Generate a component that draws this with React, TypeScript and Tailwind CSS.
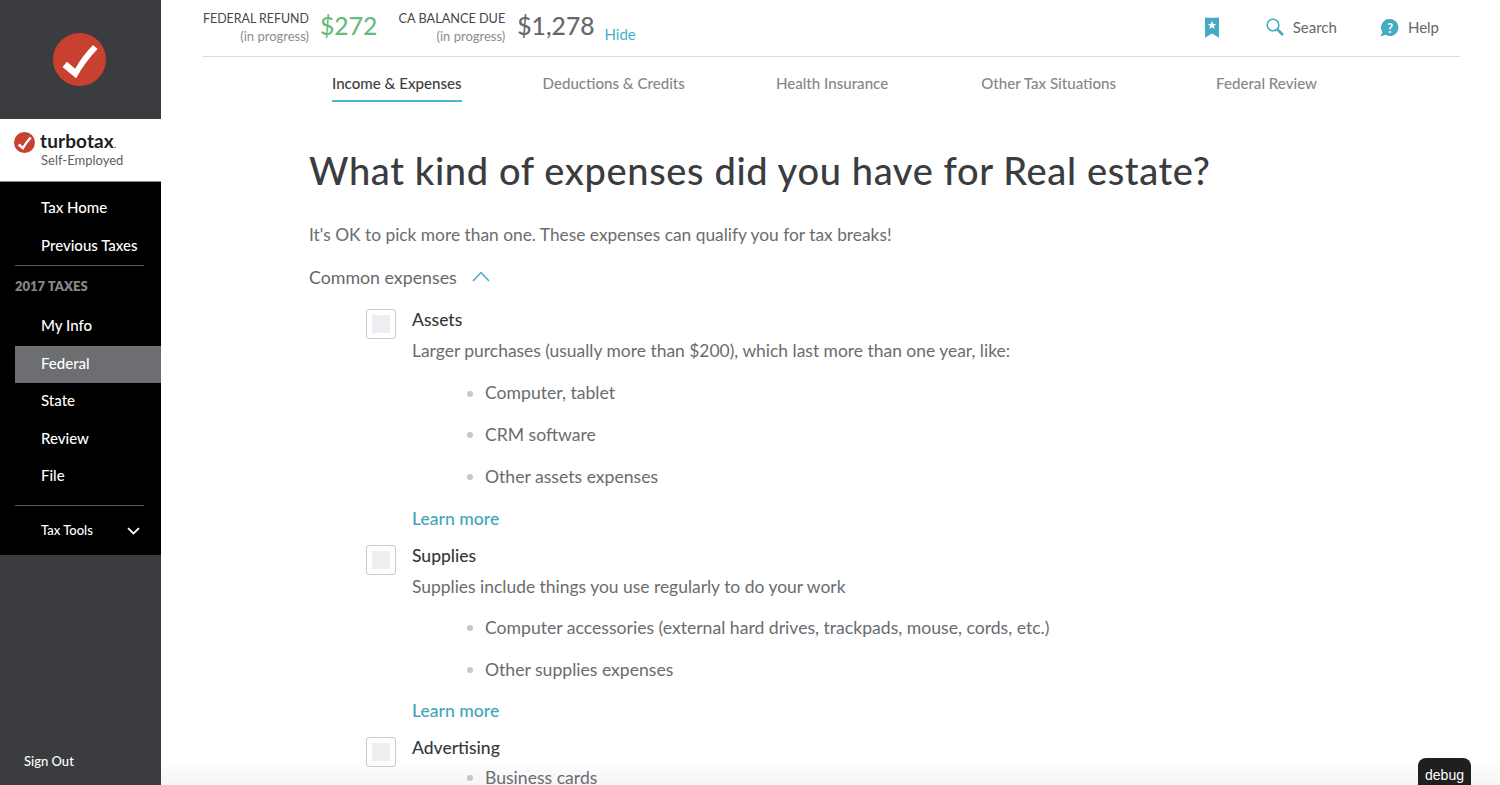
import React from "react";

const font = { fontFamily: "Lato, 'Open Sans', sans-serif" };

function Check({ size }: { size: number }) {
  return (
    <svg width={size} height={size} viewBox="0 0 52 52" className="shrink-0">
      <circle cx="26" cy="26" r="26" fill="#c8402f" />
      <path d="M9.3 33.3 L13.7 28.3 L21.7 35 Q29 22 39.3 11.7 L43.7 15.7 Q31 29 22.7 44.3 Z" fill="#fff" />
    </svg>
  );
}

function NavItem({ label, active }: { label: string; active?: boolean }) {
  return (
    <div
      className={
        "ml-[15px] h-[37.5px] flex items-center pl-[26px] pb-[3px] text-[15px] font-medium text-white " +
        (active ? "bg-[#6d6e71]" : "")
      }
    >
      {label}
    </div>
  );
}

function Sidebar() {
  return (
    <aside className="relative z-10 w-[161px] shrink-0 h-[785px] flex flex-col bg-[#3b3c40]">
      <div className="h-[119px] flex items-center justify-center pr-[2px]">
        <Check size={53} />
      </div>
      <div className="h-[63px] bg-white pl-[14px] pt-[13px] border-b border-[#8a8a8a]">
        <div className="flex items-center h-[20px]">
          <Check size={21} />
          <span className="ml-[5px] text-[19px] leading-[20px] font-bold text-[#1f1f1f] tracking-[0.1px]">turbotax<span className="text-[10px] font-normal">.</span></span>
        </div>
        <div className="ml-[27px] text-[13px] leading-[15px] mt-[1px] text-[#5e6063]">Self-Employed</div>
      </div>
      <nav className="h-[373px] bg-black pt-[8px]">
        <NavItem label="Tax Home" />
        <NavItem label="Previous Taxes" />
        <div className="ml-[15px] mr-[17px] border-t border-[#5a5a5a]" />
        <div className="ml-[15px] mt-[13px] mb-[14px] text-[13px] leading-[15px] font-extrabold text-[#85868a]">2017 TAXES</div>
        <NavItem label="My Info" />
        <NavItem label="Federal" active />
        <NavItem label="State" />
        <NavItem label="Review" />
        <NavItem label="File" />
        <div className="ml-[15px] mr-[17px] mt-[9px] border-t border-[#5a5a5a]" />
        <div className="flex items-center justify-between h-[50px] pl-[41px] pr-[21px] text-[13px] font-medium text-white">
          <span>Tax Tools</span>
          <svg width="13" height="8" viewBox="0 0 13 8" fill="none" stroke="#fff" strokeWidth="1.8">
            <path d="M1 1.2 L6.5 6.5 L12 1.2" />
          </svg>
        </div>
      </nav>
      <div className="mt-auto pl-[24px] pb-[16px] text-[13px] font-medium leading-[16px] text-white">Sign Out</div>
    </aside>
  );
}

function TopBar() {
  return (
    <div className="ml-[42px] mr-[40px] h-[57px] border-b border-[#d9dbde] flex items-start">
      <div className="text-right pt-[10px] w-[106px]">
        <div className="text-[12.4px] leading-[17px] text-[#45474a] whitespace-nowrap">FEDERAL REFUND</div>
        <div className="text-[13px] leading-[19px] text-[#8b8d90]">(in progress)</div>
      </div>
      <div className="ml-[11px] pt-[10px] text-[24.7px] leading-[32px] font-medium text-[#66bc7c]">$272</div>
      <div className="ml-[21px] text-right pt-[10px] w-[107px]">
        <div className="text-[12.7px] leading-[17px] text-[#45474a] whitespace-nowrap">CA BALANCE DUE</div>
        <div className="text-[13px] leading-[19px] text-[#8b8d90]">(in progress)</div>
      </div>
      <div className="ml-[12px] pt-[10px] text-[24.7px] leading-[32px] font-medium text-[#66686b]">$1,278</div>
      <div className="ml-[10px] pt-[25px] text-[15px] leading-[18px] text-[#45b2c7]">Hide</div>
      <div className="ml-auto flex items-center h-[55px] pr-[21px]">
        <svg width="14" height="22" viewBox="0 0 15 22" className="mr-[47px]">
          <path d="M0 0 H15 V21.5 L7.5 17 L0 21.5 Z" fill="#45abc2" />
          <path d="M7.5 3.5 L8.8 6.6 L12 6.8 L9.5 8.9 L10.4 12 L7.5 10.3 L4.6 12 L5.5 8.9 L3 6.8 L6.2 6.6 Z" fill="#fff" />
        </svg>
        <svg width="18" height="19" viewBox="0 0 18 19" fill="none" className="mr-[9px]">
          <circle cx="7" cy="7" r="5.8" stroke="#45abc2" strokeWidth="1.6" />
          <path d="M11.5 11.5 L17 17" stroke="#45abc2" strokeWidth="2.6" />
        </svg>
        <span className="text-[15px] text-[#66686b]">Search</span>
        <svg width="19" height="18" viewBox="0 0 19 18" className="ml-[43px] mr-[9px]">
          <path d="M10 0 a8.5 8.5 0 1 1 -4.6 15.7 L0.5 17.5 L2.5 13.2 A8.5 8.5 0 0 1 10 0 Z" fill="#45abc2" />
          <text x="10" y="13.5" fontSize="12.5" fontWeight="700" textAnchor="middle" fill="#fff">?</text>
        </svg>
        <span className="text-[15px] text-[#66686b]">Help</span>
      </div>
    </div>
  );
}

function Tabs() {
  const items = [
    { t: "Income & Expenses", c: "ml-0 text-[#3c3e41] border-b-2 border-[#4fb5c9]" },
    { t: "Deductions & Credits", c: "ml-[81px] text-[#85878a]" },
    { t: "Health Insurance", c: "ml-[91px] text-[#85878a]" },
    { t: "Other Tax Situations", c: "ml-[93px] text-[#85878a]" },
    { t: "Federal Review", c: "ml-[100px] text-[#85878a]" },
  ];
  return (
    <div className="ml-[171px] mt-[1px] flex text-[15.1px]">
      {items.map((i) => (
        <div key={i.t} className={"h-[44px] pt-[15px] leading-[20px] font-medium whitespace-nowrap " + i.c}>
          {i.t}
        </div>
      ))}
    </div>
  );
}

function Option({
  title,
  desc,
  bullets,
  learn,
  tight,
}: {
  title: string;
  desc?: string;
  bullets: string[];
  learn?: boolean;
  tight?: boolean;
}) {
  const ulMargin = !desc ? "mt-[6px]" : tight ? "mt-[17px]" : "mt-[18.5px]";
  const learnMargin = tight ? "mt-[17px]" : "mt-[18.5px]";
  return (
    <div className="flex">
      <div className="w-[30px] h-[30px] mt-[1px] rounded-[3px] border border-[#c8cace] flex items-center justify-center shrink-0">
        <div className="w-[18px] h-[18px] bg-[#eceef1]" />
      </div>
      <div className="ml-[16px] flex-1">
        <div className="text-[17.5px] leading-[24px] font-medium text-[#36383b] h-[24px]">{title}</div>
        {desc && <div className="mt-[7px] text-[17.45px] leading-[24px] text-[#6a6c70]">{desc}</div>}
        <ul className={ulMargin + " flex flex-col gap-[17.7px]"}>
          {bullets.map((b) => (
            <li key={b} className="flex items-center h-[24px] pl-[55px] text-[17.6px] text-[#6a6c70]">
              <span className="w-[6px] h-[6px] rounded-full bg-[#c6c8cc] mr-[12px]" />
              {b}
            </li>
          ))}
        </ul>
        {learn && <div className={learnMargin + " h-[24px] text-[17.6px] leading-[24px] font-medium text-[#3fa5b8]"}>Learn more</div>}
      </div>
    </div>
  );
}

export default function App() {
  return (
    <div className="relative flex h-[785px] w-[1500px] overflow-hidden bg-white" style={font}>
      <Sidebar />
      <div className="absolute left-[161px] right-0 bottom-0 h-[26px] bg-gradient-to-b from-transparent to-[#f1f1f2]/70 pointer-events-none" />
      <main className="relative flex-1 min-w-0">
        <TopBar />
        <Tabs />
        <div className="ml-[148px]">
          <h1 className="mt-[42px] text-[38px] leading-[52px] font-medium text-[#3a3c3f] whitespace-nowrap tracking-[0.63px]">
            What kind of expenses did you have for Real estate?
          </h1>
          <p className="mt-[27px] text-[17.35px] leading-[24px] text-[#6a6c70]">It's OK to pick more than one. These expenses can qualify you for tax breaks!</p>
          <div className="mt-[18px] flex items-center h-[24px] text-[17.8px] text-[#66686b]">
            Common expenses
            <svg width="18" height="11" viewBox="0 0 18 11" fill="none" stroke="#45abc2" strokeWidth="1.5" className="ml-[15px] -mt-[2px]">
              <path d="M1 10 L9 1.5 L17 10" />
            </svg>
          </div>
          <div className="ml-[57px] mt-[19px] flex flex-col gap-[13px]">
            <Option
              title="Assets"
              desc="Larger purchases (usually more than $200), which last more than one year, like:"
              bullets={["Computer, tablet", "CRM software", "Other assets expenses"]}
              learn
            />
            <Option
              title="Supplies"
              desc="Supplies include things you use regularly to do your work"
              bullets={["Computer accessories (external hard drives, trackpads, mouse, cords, etc.)", "Other supplies expenses"]}
              learn
              tight
            />
            <Option title="Advertising" bullets={["Business cards"]} />
          </div>
        </div>
      </main>
      <div
        className="absolute left-[1418px] top-[758px] w-[53px] h-[30px] rounded-t-[8px] bg-[#1f1f1f] text-white text-center text-[14px] leading-[34px]"
        style={{ fontFamily: "'Liberation Sans', sans-serif" }}
      >
        debug
      </div>
    </div>
  );
}
